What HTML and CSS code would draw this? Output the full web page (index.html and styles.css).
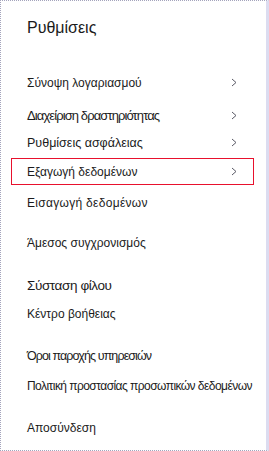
FILE: index.html
```html
<!DOCTYPE html>
<html lang="el">
<head>
    <meta charset="UTF-8">
    <meta name="viewport" content="width=device-width, initial-scale=1.0">
    <title>Ρυθμίσεις</title>
    <link rel="stylesheet" href="styles.css">
</head>
<body>

<div class="panel">
    <h1 class="title">Ρυθμίσεις</h1>

    <ul class="menu">
        <li class="row">
            <span>Σύνοψη λογαριασμού</span>
            <svg class="chevron" viewBox="0 0 6 9"><path d="M1 1 L5 4.5 L1 8"/></svg>
        </li>
        <li class="row activity mt-6">
            <span>Διαχείριση δραστηριότητας</span>
            <svg class="chevron" viewBox="0 0 6 9"><path d="M1 1 L5 4.5 L1 8"/></svg>
        </li>
        <li class="row mid">
            <span>Ρυθμίσεις ασφάλειας</span>
            <svg class="chevron" viewBox="0 0 6 9"><path d="M1 1 L5 4.5 L1 8"/></svg>
        </li>
        <li class="row selected mt-2">
            <span>Εξαγωγή δεδομένων</span>
            <svg class="chevron" viewBox="0 0 6 9"><path d="M1 1 L5 4.5 L1 8"/></svg>
        </li>
        <li class="row import mt-4">
            <span>Εισαγωγή δεδομένων</span>
        </li>
        <li class="row mt-13">
            <span>Άμεσος συγχρονισμός</span>
        </li>
        <li class="row friend mt-16">
            <span>Σύσταση φίλου</span>
        </li>
        <li class="row mt-1">
            <span>Κέντρο βοήθειας</span>
        </li>
        <li class="row terms mt-15">
            <span>Όροι παροχής υπηρεσιών</span>
        </li>
        <li class="row dense mt-3">
            <span>Πολιτική προστασίας προσωπικών δεδομένων</span>
        </li>
        <li class="row mt-15">
            <span>Αποσύνδεση</span>
        </li>
    </ul>
</div>

</body>
</html>
```

FILE: styles.css
```css
/* Colors */
:root {
    --text: #1b1b1b;
    --chevron: #5a5a66;
    --frame: #a4a4bc;
    --frame-light: #dcdcf0;
    --highlight: #e8112d;
}

body {
    margin: 0;
    padding: 0;
    background-color: #ffffff;
    font-family: "Liberation Sans", Arial, sans-serif;
    color: var(--text);
}

.panel {
    box-sizing: border-box;
    width: 269px;
    height: 451px;
    border: 1px dotted var(--frame);
    border-right: 3px solid var(--frame-light);
    background-color: #ffffff;
}

.title {
    margin: 0;
    padding: 14px 0 0 26px;
    font-size: 16px;
    font-weight: normal;
    line-height: 26px;
}

.menu {
    list-style: none;
    margin: 28px 0 0 0;
    padding: 0 12px 0 10px;
}

.row {
    box-sizing: border-box;
    display: flex;
    align-items: center;
    justify-content: space-between;
    height: 27px;
    padding: 0 16px 0 15px;
    border: 1px solid transparent;
    font-size: 12px;
    white-space: nowrap;
}

/* the odd rows are set in slightly different type */
.row.activity {
    font-size: 13px;
    letter-spacing: -0.9px;
}

.row.terms {
    font-size: 12.5px;
    letter-spacing: -0.9px;
}

.row.friend {
    font-size: 13.5px;
    letter-spacing: -0.4px;
}

.row.mid {
    font-size: 12.5px;
}

.row.import {
    letter-spacing: 0.3px;
}

.row.dense {
    letter-spacing: -0.55px;
}

.row.selected {
    border-color: var(--highlight);
}

.chevron {
    width: 6px;
    height: 9px;
    flex-shrink: 0;
    fill: none;
    stroke: var(--chevron);
    stroke-width: 1;
}

.mt-1 { margin-top: 1px; }
.mt-2 { margin-top: 2px; }
.mt-3 { margin-top: 3px; }
.mt-4 { margin-top: 4px; }
.mt-6 { margin-top: 6px; }
.mt-13 { margin-top: 13px; }
.mt-15 { margin-top: 15px; }
.mt-16 { margin-top: 16px; }
```
